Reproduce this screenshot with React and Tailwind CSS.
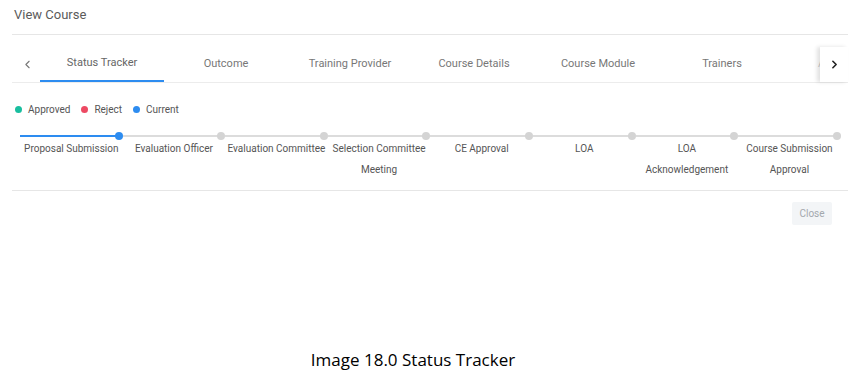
import { ChevronLeft, ChevronRight } from "lucide-react";

const tabs = [
  "Status Tracker",
  "Outcome",
  "Training Provider",
  "Course Details",
  "Course Module",
  "Trainers",
  "Attendance",
];

const steps = [
  ["Proposal Submission"],
  ["Evaluation Officer"],
  ["Evaluation Committee"],
  ["Selection Committee", "Meeting"],
  ["CE Approval"],
  ["LOA"],
  ["LOA", "Acknowledgement"],
  ["Course Submission", "Approval"],
];

const legend = [
  { label: "Approved", color: "bg-[#19be9f]" },
  { label: "Reject", color: "bg-[#ed4a63]" },
  { label: "Current", color: "bg-[#2d8cf0]" },
];

export default function App() {
  return (
    <div className="h-[376px] w-[853px] bg-white font-['Roboto',sans-serif] text-[#555]">
      <div className="pl-[12px] pr-[5px]">
        <h1 className="pl-[2px] pt-[6px] text-[13px] leading-[17px] text-[#5b5b5b]">
          View Course
        </h1>
        <div className="mt-[11px] border-t border-[#e6e6e6]" />

        {/* tabs */}
        <div className="mt-[12px] flex h-[36px] border-b border-[#ececec] pl-[3px]">
          <button className="flex w-[25px] items-center justify-center pb-[1px] text-[#777]">
            <ChevronLeft size={13} strokeWidth={2} />
          </button>
          <div className="flex w-[780px] overflow-hidden">
            {tabs.map((t, i) => (
              <div
                key={t}
                className={`flex h-[35px] w-[124px] shrink-0 items-center justify-center pb-[1px] text-[11px] ${
                  i === 0 ? "border-b-2 border-[#2d8cf0] text-[#666]" : "text-[#777]"
                } ${i === 6 ? "opacity-40" : ""}`}
              >
                {t}
              </div>
            ))}
          </div>
          <button className="flex w-[28px] items-center justify-center text-[#222] shadow-[-3px_0_4px_rgba(0,0,0,0.12)]">
            <ChevronRight size={13} strokeWidth={3} />
          </button>
        </div>

        {/* legend */}
        <div className="mt-[19px] flex items-center gap-[11px] pl-[3px] text-[10px] text-[#555]">
          {legend.map((l) => (
            <div key={l.label} className="flex items-center gap-[6px]">
              <span className={`h-[7px] w-[7px] rounded-full ${l.color}`} />
              {l.label}
            </div>
          ))}
        </div>

        {/* stepper */}
        <div className="mt-[15px] flex w-[821px] pl-[8px]">
          {steps.map((s, i) => (
            <div key={i} className="w-[102.6px] shrink-0">
              <div className="relative h-[8px]">
                <div
                  className={`absolute left-0 right-[4px] top-[3px] h-[2px] ${
                    i === 0 ? "bg-[#2d8cf0]" : "bg-[#dcdcdc]"
                  }`}
                />
                <span
                  className={`absolute right-0 top-0 h-[8px] w-[8px] rounded-full ${
                    i === 0 ? "bg-[#2d8cf0]" : "bg-[#d4d4d4]"
                  }`}
                />
              </div>
              <div className="-mt-[2px] text-center text-[10px] leading-[21px] whitespace-nowrap text-[#555]">
                {s.map((line) => (
                  <div key={line}>{line}</div>
                ))}
              </div>
            </div>
          ))}
        </div>

        <div className="mt-[10px] border-t border-[#e6e6e6]" />
        <div className="flex justify-end pr-[16px] pt-[11px]">
          <button className="h-[23px] w-[40px] rounded-[2px] bg-[#f3f5f7] text-[10px] text-[#a3a8ad]">
            Close
          </button>
        </div>
      </div>

      <p className="mt-[122px] pr-[27px] text-center font-['Open_Sans',sans-serif] text-[17px] text-black">
        Image 18.0 Status Tracker
      </p>
    </div>
  );
}
